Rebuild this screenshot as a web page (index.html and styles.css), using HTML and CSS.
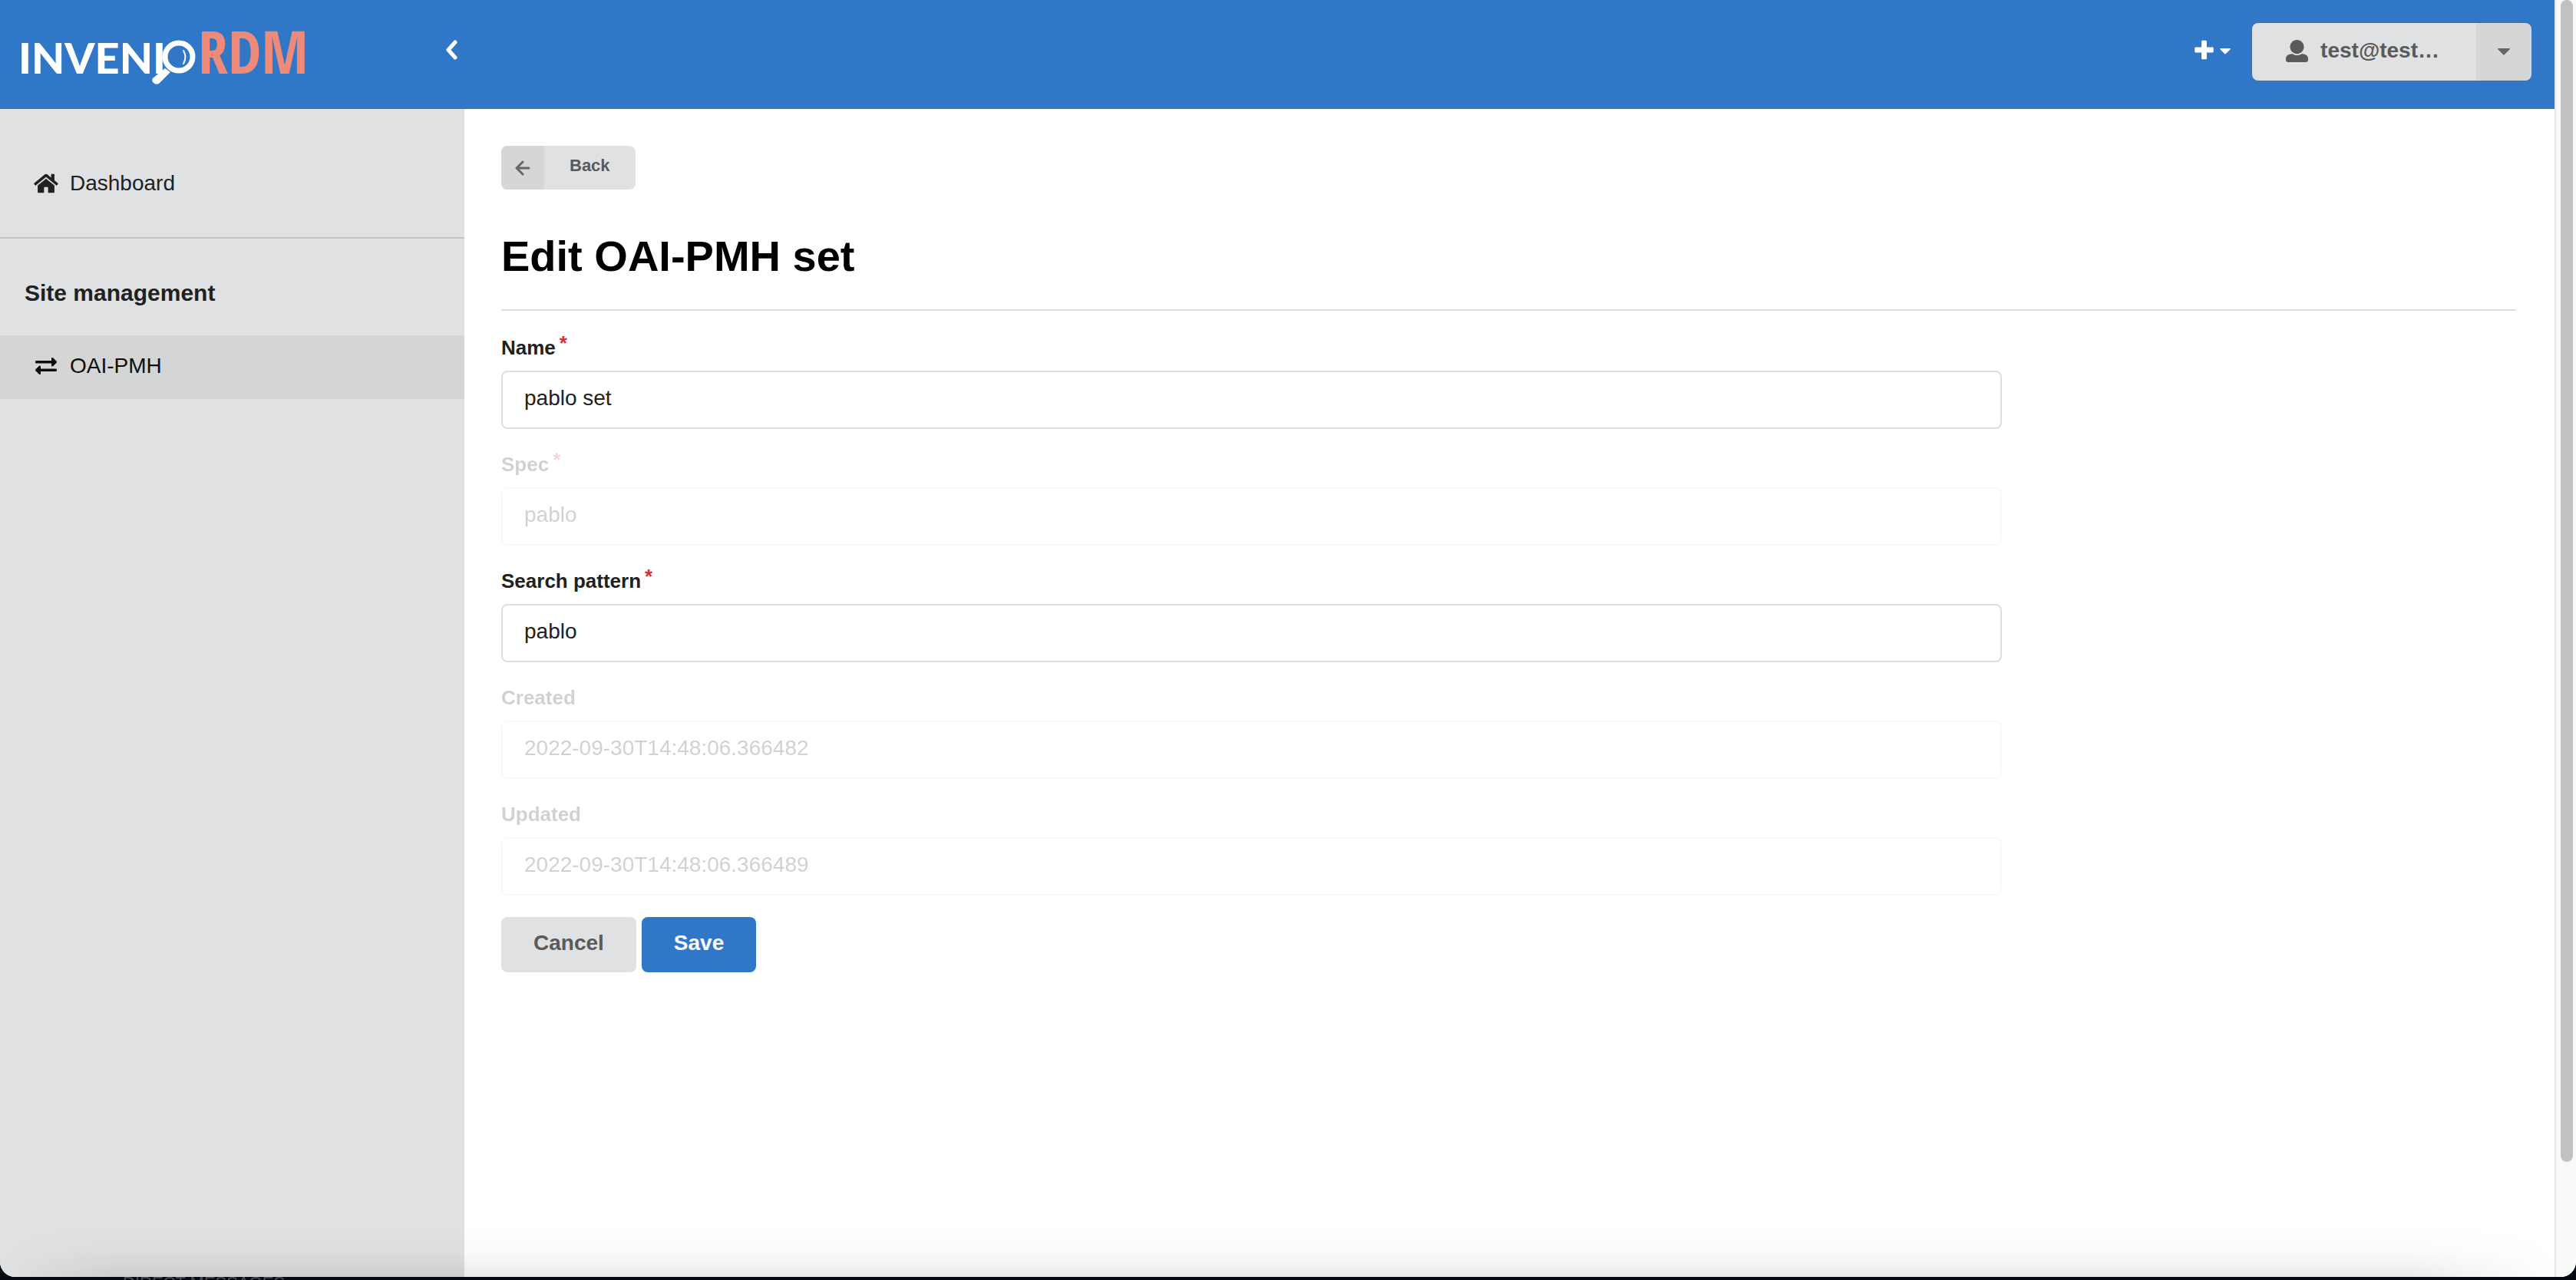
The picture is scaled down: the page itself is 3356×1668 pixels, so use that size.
FILE: index.html
```html
<!DOCTYPE html>
<html lang="en">
<head>
<meta charset="utf-8">
<title>Edit OAI-PMH set</title>
<link rel="stylesheet" href="styles.css">
</head>
<body>
<div class="window">
  <div class="app">
    <header class="topbar">
      <a class="logo" href="#" aria-label="InvenioRDM">
        <svg width="380" height="112" viewBox="-4 0 380 112">
          <text class="logo-invenio" x="-4" y="96">INVENI</text>
          <circle cx="205" cy="74" r="18" fill="none" stroke="#fff" stroke-width="7"/>
          <path d="M211 66q5 8 0 17" fill="none" stroke="#fff" stroke-width="2" stroke-linecap="round"/>
          <path d="M187 89l7 5-15 15q-4 2-7-1t-1-6z" fill="#fff"/>
          <text class="logo-rdm" x="230" y="96">RDM</text>
        </svg>
      </a>
      <button class="icon-button collapse" type="button" aria-label="Collapse menu">
        <svg width="16" height="26" viewBox="0 0 16 26"><path d="M13 3L4 13l9 10" fill="none" stroke="currentColor" stroke-width="5" stroke-linecap="round" stroke-linejoin="round"/></svg>
      </button>
      <button class="icon-button create" type="button" aria-label="Create">
        <svg width="25" height="28" viewBox="0 0 448 512"><path fill="currentColor" d="M448 294.2v-76.4c0-13.3-10.7-24-24-24H286.2V56c0-13.3-10.7-24-24-24h-76.4c-13.3 0-24 10.7-24 24v137.8H24c-13.3 0-24 10.7-24 24v76.4c0 13.3 10.7 24 24 24h137.8V456c0 13.3 10.7 24 24 24h76.4c13.3 0 24-10.7 24-24V318.2H424c13.3 0 24-10.7 24-24z"/></svg>
        <svg class="create-caret" width="14" height="8" viewBox="0 0 16 9"><path fill="currentColor" d="M1 0h14q2 0 0 2L9 8q-1 1-2 0L1 2Q-1 0 1 0z"/></svg>
      </button>
      <div class="user-group">
        <button class="user-button" type="button">
          <svg width="29" height="29" viewBox="0 0 512 512"><path fill="currentColor" d="M256 0c88.366 0 160 71.634 160 160s-71.634 160-160 160S96 248.366 96 160 167.634 0 256 0zm183.283 333.821l-71.313-17.828c-74.923 53.89-165.738 41.864-223.94 0l-71.313 17.828C29.981 344.505 0 382.903 0 426.955V464c0 26.51 21.49 48 48 48h416c26.51 0 48-21.49 48-48v-37.045c0-44.052-29.981-82.45-72.717-93.134z"/></svg>
          <span>test@test…</span>
        </button>
        <button class="user-toggle" type="button" aria-label="Account menu">
          <svg width="16" height="9" viewBox="0 0 16 9"><path fill="currentColor" d="M1 0h14q2 0 0 2L9 8q-1 1-2 0L1 2Q-1 0 1 0z"/></svg>
        </button>
      </div>
    </header>

    <div class="columns">
      <nav class="sidebar">
        <a class="nav-item" href="#">
          <svg width="32" height="28" viewBox="0 0 576 512"><path fill="currentColor" d="M488 312.7V456c0 13.3-10.7 24-24 24H348c-6.6 0-12-5.4-12-12V356c0-6.6-5.4-12-12-12h-72c-6.6 0-12 5.4-12 12v112c0 6.6-5.4 12-12 12H112c-13.3 0-24-10.7-24-24V312.7c0-3.6 1.6-7 4.4-9.3l188-154.8c4.4-3.6 10.8-3.6 15.3 0l188 154.8c2.7 2.3 4.3 5.7 4.3 9.3zm83.6-60.9L488 182.9V44.4c0-6.6-5.4-12-12-12h-56c-6.6 0-12 5.4-12 12V117l-89.5-73.7c-17.7-14.6-43.3-14.6-61 0L4.4 251.8c-5.1 4.2-5.8 11.8-1.6 16.9l25.5 31c4.2 5.1 11.8 5.8 16.9 1.6l235.2-193.7c4.4-3.6 10.8-3.6 15.3 0l235.2 193.7c5.1 4.2 12.7 3.5 16.9-1.6l25.5-31c4.2-5.2 3.4-12.7-1.7-16.9z"/></svg>
          <span>Dashboard</span>
        </a>
        <hr class="nav-divider">
        <h2 class="nav-heading">Site management</h2>
        <a class="nav-item active" href="#" aria-current="page">
          <svg width="28" height="28" viewBox="0 0 512 512"><path fill="currentColor" d="M0 168v-16c0-13.255 10.745-24 24-24h360V80c0-21.367 25.899-32.042 40.971-16.971l80 80c9.372 9.373 9.372 24.569 0 33.941l-80 80C409.956 271.982 384 261.456 384 240v-48H24c-13.255 0-24-10.745-24-24zm488 152H128v-48c0-21.314-25.862-32.08-40.971-16.971l-80 80c-9.372 9.373-9.372 24.569 0 33.941l80 80C102.057 463.997 128 453.437 128 432v-48h360c13.255 0 24-10.745 24-24v-16c0-13.255-10.745-24-24-24z"/></svg>
          <span>OAI-PMH</span>
        </a>
      </nav>

      <main class="content">
        <button class="back" type="button">
          <span class="back-icon"><svg width="20" height="20" viewBox="0 0 20 20"><path d="M18 10H3M10 2l-8 8 8 8" fill="none" stroke="currentColor" stroke-width="3" stroke-linecap="round" stroke-linejoin="round"/></svg></span>
          <span class="back-label">Back</span>
        </button>
        <h1 class="title">Edit OAI-PMH set</h1>
        <form class="form">
          <div class="field">
            <label for="name">Name<span class="required">*</span></label>
            <input id="name" type="text" value="pablo set">
          </div>
          <div class="field disabled">
            <label for="spec">Spec<span class="required">*</span></label>
            <input id="spec" type="text" value="pablo" disabled>
          </div>
          <div class="field">
            <label for="pattern">Search pattern<span class="required">*</span></label>
            <input id="pattern" type="text" value="pablo">
          </div>
          <div class="field disabled">
            <label for="created">Created</label>
            <input id="created" type="text" value="2022-09-30T14:48:06.366482" disabled>
          </div>
          <div class="field disabled">
            <label for="updated">Updated</label>
            <input id="updated" type="text" value="2022-09-30T14:48:06.366489" disabled>
          </div>
          <div class="actions">
            <button class="button" type="button">Cancel</button>
            <button class="button primary" type="submit">Save</button>
          </div>
        </form>
      </main>
    </div>
  </div>
  <div class="scrollbar"><div class="scrollbar-thumb"></div></div>
</div>
<div class="desktop">DIRECT MESSAGES</div>
</body>
</html>
```
FILE: styles.css
```css
* {
  box-sizing: border-box;
}

body {
  margin: 0;
  min-height: 100vh;
  display: flex;
  flex-direction: column;
  background: #060a12;
  color: #212121;
  font-family: "Liberation Sans", Arial, sans-serif;
  font-size: 28px;
  line-height: 36px;
}

button,
input {
  font: inherit;
}

button {
  border: 0;
  padding: 0;
  cursor: pointer;
}

svg {
  display: block;
  flex: none;
}

a {
  color: inherit;
  text-decoration: none;
}

/* Browser window */
.window {
  position: relative;
  flex: 1;
  display: flex;
  overflow: hidden;
  border-radius: 0 0 20px 20px;
  background: #fff;
}

.window::after {
  content: "";
  position: absolute;
  inset: auto 0 0;
  height: 64px;
  background: linear-gradient(rgba(0, 0, 0, 0), rgba(0, 0, 0, 0.02) 50%, rgba(0, 0, 0, 0.08));
  mask-image: linear-gradient(90deg, transparent, #000 150px, #000 calc(100% - 220px), transparent calc(100% - 20px));
  pointer-events: none;
}

.app {
  flex: 1;
  min-width: 0;
  display: flex;
  flex-direction: column;
}

.scrollbar {
  width: 28px;
  padding: 0 4px 0 6px;
  border-left: 2px solid #e8e8e8;
  background: #fafafa;
}

.scrollbar-thumb {
  height: 91%;
  border-radius: 8px;
  background: #c1c1c1;
}

.desktop {
  height: 4px;
  padding-left: 160px;
  overflow: hidden;
  color: #4a4c50;
  font-size: 22px;
  line-height: 16px;
}

/* Top bar */
.topbar {
  display: flex;
  align-items: flex-start;
  height: 142px;
  padding: 30px 30px 0 24px;
  background: #3077c7;
  color: #fff;
}

.logo {
  margin-top: -30px;
}

.logo-invenio {
  fill: #fff;
  font-family: Lato, sans-serif;
  font-weight: 900;
  font-size: 56px;
}

.logo-rdm {
  fill: #ed8a79;
  font-family: "Noto Sans ExtraCondensed", "Open Sans Condensed", "Liberation Sans Narrow", sans-serif;
  font-weight: 700;
  font-size: 78px;
}

.icon-button {
  display: flex;
  align-items: center;
  height: 70px;
  background: none;
  color: inherit;
}

.collapse {
  margin-left: 176px;
}

.create {
  gap: 8px;
  margin-left: auto;
  margin-right: 28px;
}

.create-caret {
  margin-top: 4px;
}

.user-group {
  display: flex;
  height: 75px;
  border-radius: 8px;
  overflow: hidden;
  color: #5a5a5a;
}

.user-button {
  display: flex;
  align-items: center;
  gap: 16px;
  padding: 0 48px 3px 44px;
  background: #e0e1e2;
  color: inherit;
  font-weight: 700;
}

.user-toggle {
  width: 72px;
  display: flex;
  align-items: center;
  justify-content: center;
  background: #d5d6d8;
  color: #666;
}

/* Sidebar */
.columns {
  flex: 1;
  display: flex;
}

.sidebar {
  width: 605px;
  flex: none;
  padding-top: 57px;
  background: #e0e1e2;
}

.nav-item {
  display: grid;
  grid-template-columns: 36px auto;
  justify-content: start;
  align-items: center;
  justify-items: center;
  gap: 13px;
  height: 83px;
  padding: 0 42px 3px;
}

.nav-item.active {
  background: #d4d6d5;
  color: #0d0d0d;
}

.nav-divider {
  margin: 27px 0 0;
  border: 0;
  border-top: 2px solid #c1c2c4;
  border-bottom: 2px solid #e4e5e6;
}

.nav-heading {
  margin: 51px 32px 37px;
  font-size: 30px;
  line-height: 36px;
}

/* Page content */
.content {
  flex: 1;
  min-width: 0;
  padding: 48px 50px 48px 48px;
}

.back {
  display: flex;
  height: 57px;
  border-radius: 8px;
  overflow: hidden;
  background: #e0e1e2;
  color: #5a5a5a;
  font-size: 22px;
  font-weight: 700;
}

.back-icon {
  display: flex;
  align-items: center;
  justify-content: center;
  width: 56px;
  height: 100%;
  background: #d5d6d8;
  color: #666;
}

.back-label {
  padding: 8px 33px 0;
}

.title {
  margin: 51px 0 30px;
  padding-bottom: 33px;
  border-bottom: 2px solid #dedede;
  color: #000;
  font-size: 56px;
  line-height: 72px;
}

.form {
  display: flex;
  flex-direction: column;
  gap: 28px;
  width: calc(75% - 14px);
}

.field {
  display: flex;
  flex-direction: column;
  gap: 12px;
}

.field label {
  display: flex;
  gap: 5px;
  font-size: 26px;
  font-weight: 700;
}

.required {
  color: #ca3530;
  line-height: 24px;
}

.field input {
  width: 100%;
  height: 76px;
  padding: 0 28px 4px;
  border: 2px solid #dedede;
  border-radius: 8px;
  background: #fff;
  color: #212121;
}

.field.disabled {
  opacity: 0.2;
}

.actions {
  display: flex;
  gap: 7px;
}

.button {
  height: 72px;
  padding: 0 42px 4px;
  border-radius: 8px;
  background: #e0e1e2;
  color: #5a5a5a;
  font-weight: 700;
}

.button.primary {
  background: #3077c7;
  color: #fff;
}
```
